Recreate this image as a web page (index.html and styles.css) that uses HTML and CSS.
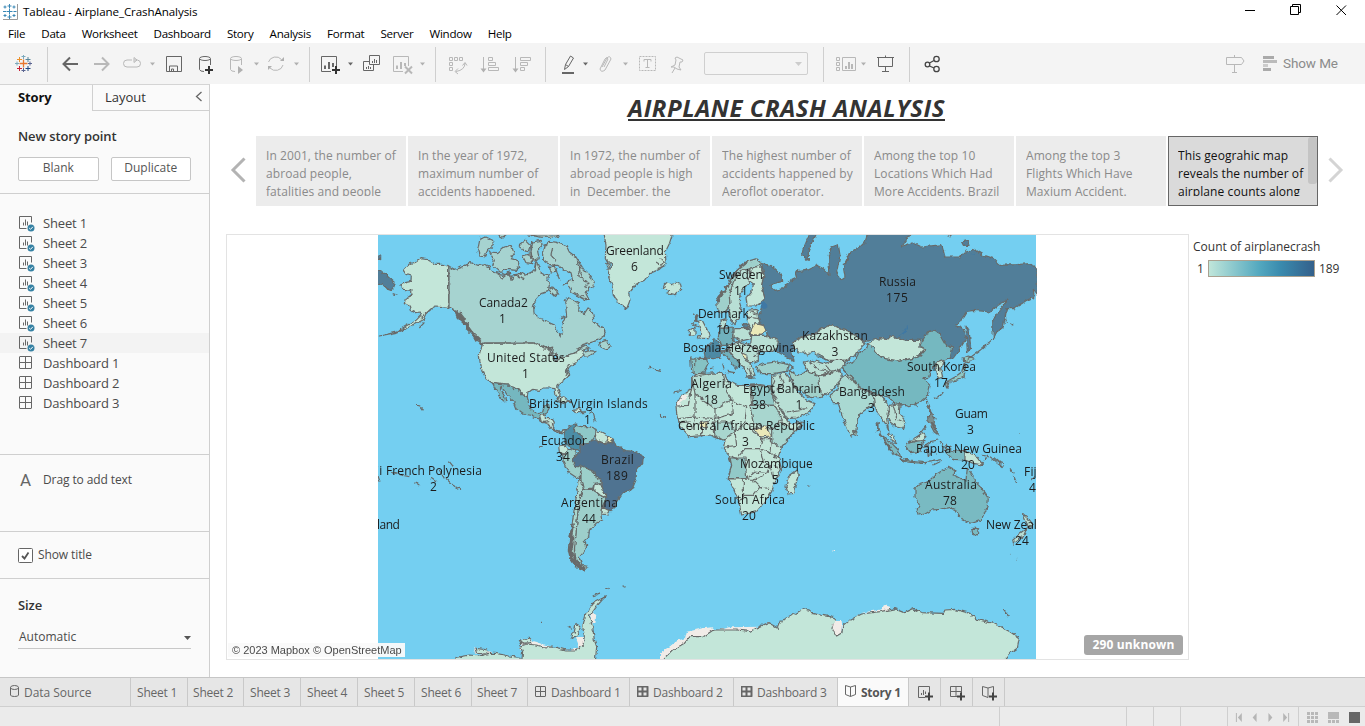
FILE: index.html
```html
<!DOCTYPE html>
<html lang="en">
<head>
<meta charset="utf-8">
<title>Tableau - Airplane_CrashAnalysis</title>
<link rel="stylesheet" href="styles.css">
</head>
<body>
<svg class="defs" width="0" height="0">
  <defs>
    <g id="sheet" fill="none" stroke="#666"><path d="M7.500 12.500H.5V.5h12v6"/><path d="M4.500 9.500v-3M6.500 9.500v-6M8.500 9.500v-4" stroke-width="1"/><circle cx="12" cy="12" r="3.500" fill="#3581a3" stroke="none"/><path d="M10.200 12l1.300 1.300 2.400-2.500" stroke="#fff"/></g>
    <g id="dash" fill="none" stroke="#666"><rect x=".5" y=".5" width="12" height="12" rx=".5"/><path d="M6.500 .5v12M.5 6.500h12"/></g>
    <g id="dashtab" fill="none" stroke="#666"><rect x=".5" y=".5" width="10" height="10" rx=".5"/><path d="M5.500 .5v10M.5 5.500h10"/></g>
    <g id="book" fill="none" stroke="#666"><path d="M5.500 2L.5 .5v9l5 2 5-2v-9L5.500 2v9.500"/></g>
  </defs>
</svg>
<div class="app">
  <header class="titlebar">
    <svg class="appicon" width="17" height="18" viewBox="2 1 17 18"><path d="M3 18.500h14.500V3" fill="none" stroke="#999"/><path d="M9.500 7.500v6M6.500 10.500h6M9.500 3v4M7.500 5h4M9.500 14v4M7.500 16h4M3 10.500h3M13.500 10.500h3M5 4.500v3M3.500 6h3M14 4.500v3M12.500 6h3M5 13v3M3.500 14.500h3M14 13v3M12.500 14.500h3" stroke="#3987b5" fill="none"/></svg>
    <span class="apptitle">Tableau - Airplane_CrashAnalysis</span>
    <svg class="winbtns" width="125" height="22" viewBox="1240 0 125 22" fill="none" stroke="#000"><path d="M1245 10.500h10M1290.500 6.500h8v8h-8zM1292.500 6.500v-2h8v8h-2M1336.500 5.500l9.500 9.500M1346 5.500l-9.500 9.500"/></svg>
  </header>
  <nav class="menu"><span>File</span><span>Data</span><span>Worksheet</span><span>Dashboard</span><span>Story</span><span>Analysis</span><span>Format</span><span>Server</span><span>Window</span><span>Help</span></nav>
  <div class="toolbar">
    <div class="grp"><svg width="47" height="41" viewBox="0 43 47 41" fill="none"><path d="M23.500 59.500v8M19.500 63.500h8" stroke="#e8762d" stroke-width="1.300"/><path d="M19.500 57v5M17 59.500h5" stroke="#eb912c"/><path d="M28 57v5M25.500 59.500h5" stroke="#59879b"/><path d="M19.500 66v5M17 68.500h5" stroke="#c72035"/><path d="M28 66v5M25.500 68.500h5" stroke="#1f457e"/><path d="M23.500 55v4M21.500 56.500h4M15 63.500h4M17 61.500v4" stroke="#7ba9bd"/><path d="M23.500 68v4M21.500 70.500h4M28 63.500h4M30 61.500v4" stroke="#5b6591"/></svg></div>
    <div class="grp">
      <svg width="38" height="41" viewBox="48 43 38 41"><path d="M78 64H63.500M70 57.500L63.500 64l6.500 6.500" class="d2"/></svg>
      <svg width="31" height="41" viewBox="86 43 31 41"><path d="M94 64h14.500M102 57.500l6.500 6.500-6.500 6.500" class="l2"/></svg>
      <svg width="42" height="41" viewBox="117 43 42 41"><path d="M132 60h-5q-3.500 0-3.500 3.500t3.500 3.500h10q3.500 0 3.500-3.500 0-3-3-3.500h-3M134 57.500v5l3-2.500z" class="l"/><path d="M150 62.500h5l-2.500 3z" class="lf"/></svg>
      <svg width="31" height="41" viewBox="159 43 31 41"><path d="M166.500 56.500h15v15h-15zM169.500 71v-5h8v5M171.500 71v-2h2v2" class="d"/></svg>
      <svg width="31" height="41" viewBox="190 43 31 41"><path d="M204 71.500q-4 0-4.500-2V59M210.500 65V59" class="d"/><ellipse cx="205" cy="58.500" rx="5.500" ry="2" class="d"/><path d="M205 70h8M209 66v8" class="k2"/></svg>
      <svg width="41" height="41" viewBox="221 43 41 41"><path d="M235 71.500q-4 0-4.500-2V59M241.500 65V59" class="l"/><ellipse cx="236" cy="58.500" rx="5.500" ry="2" class="l"/><path d="M238 66v8l5-4zM254 62.500h5l-2.500 3z" class="lf"/></svg>
      <svg width="47" height="41" viewBox="262 43 47 41"><path d="M268.500 62a7.500 7 0 0 1 13-2.500M283 65a7.500 7 0 0 1-13 3" class="l"/><path d="M280 61h4v-4zM272 66h-4v4zM294 62.500h5l-2.500 3z" class="lf"/></svg>
    </div>
    <div class="grp">
      <svg width="48" height="41" viewBox="310 43 48 41"><path d="M331 71.500h-9.500v-15h15V66" class="d"/><path d="M325 69v-3.500M329 69v-7M333 67v-4" class="d2"/><path d="M332 70h8M336 66v8" class="k2"/><path d="M348 62.500h5l-2.500 3z" class="df"/></svg>
      <svg width="30" height="41" viewBox="358 43 30 41"><path d="M369.500 55.500h10v9h-10zM369 61.500h-5.500v9h10V65" class="d"/><path d="M372.500 63v-2M374.500 63v-4M376.500 63v-3M366.500 69v-2M368.500 69v-3M370.500 69v-2" class="d"/></svg>
      <svg width="47" height="41" viewBox="388 43 47 41"><path d="M403 71.500h-9.500v-15h15V66" class="l"/><path d="M397 69v-3.500M401 69v-7M405 66v-3" class="l2"/><path d="M405 66.500l7 7M412 66.500l-7 7" class="l2"/><path d="M420 62.500h5l-2.500 3z" class="lf"/></svg>
    </div>
    <div class="grp">
      <svg width="36" height="41" viewBox="436 43 36 41"><path d="M449.500 57.500h3v3h-3zM454.500 57.500h3v3h-3zM459.500 57.500h3v3h-3zM449.500 62.500h3v3h-3zM449.500 67.500h3v3h-3zM465 63q0 7-9 8.500M458 68.500l-3 3 3 2.500M462.500 65.500l2.500-3 2 3" class="l"/></svg>
      <svg width="34" height="41" viewBox="472 43 34 41"><path d="M483.500 57v14M488.500 57.500h4v3h-4zM488.500 62.500h7v3h-7zM488.500 67.500h10v3h-10z" class="l"/><path d="M480.500 68.500h6l-3 4z" class="lf"/></svg>
      <svg width="39" height="41" viewBox="506 43 39 41"><path d="M515.500 57v14M520.500 57.500h10v3h-10zM520.500 62.500h7v3h-7zM520.500 67.500h4v3h-4z" class="l"/><path d="M512.500 68.500h6l-3 4z" class="lf"/></svg>
    </div>
    <div class="grp">
      <svg width="47" height="41" viewBox="546 43 47 41"><path d="M564.500 69.500l1-5 5-8.500 3 2-5 8.500-4 3zM565.500 64.500l3 2" class="d"/><path d="M562 73h12" class="d2"/><path d="M583 62.500h5l-2.500 3z" class="df"/></svg>
      <svg width="42" height="41" viewBox="593 43 42 41"><path d="M602 67l5-9q3-3 4 1l-6 11q-4 3-5-1l5-10q2-3 3 0l-4 8" class="l"/><path d="M623 62.500h5l-2.500 3z" class="lf"/></svg>
      <svg width="30" height="41" viewBox="635 43 30 41"><rect x="639.500" y="56.500" width="16" height="14" class="l" stroke-dasharray="2 1"/><path d="M644 61.500v-2h7v2M647.500 59.500v8M645.500 67.500h4" class="l"/></svg>
      <svg width="39" height="41" viewBox="665 43 39 41"><path d="M677 57l6 3-1 2h-2l-1 5 2 3-4-1-3-2-3 0 4-2 1-5-1-2zM675 68l-3 5" class="l"/></svg>
      <div class="combo"><svg width="9" height="6" viewBox="0 0 9 6"><path d="M1 1h7l-3.500 4z" fill="#ccc"/></svg></div>
    </div>
    <div class="grp">
      <svg width="47" height="41" viewBox="824 43 47 41"><path d="M836.500 57.500h3v3h-3zM836.500 62.500h3v3h-3zM836.500 67.500h3v3h-3zM842.500 57.500h13v13h-13z" class="l"/><path d="M846 69v-3M849 69v-7M852 69v-5" class="l2"/><path d="M861 62.500h5l-2.500 3z" class="lf"/></svg>
      <svg width="38" height="41" viewBox="871 43 38 41"><path d="M877 57.500h17M878.500 58v8.500h14V58M885.500 55.500v2M885.500 66.500v5M882 71.500h7" class="d"/></svg>
    </div>
    <svg width="60" height="41" viewBox="910 43 60 41" fill="none" stroke="#444" stroke-width="1.300"><circle cx="927.500" cy="64.500" r="2.300"/><circle cx="936.500" cy="59" r="2.700"/><circle cx="936.500" cy="69" r="2.700"/><path d="M929.500 63l4.500-2.500M929.500 66l4.500 2"/></svg>
    <div class="right">
      <svg width="58" height="41" viewBox="1220 43 58 41"><path d="M1226.500 57.500h15l2.500 3.500-2.500 3.500h-15zM1234.500 55v2M1234.500 65v8M1232 72.500h5" class="l"/><path d="M1263 56h11v3h-11zM1263 68h8v3h-8z" fill="#aaa"/><path d="M1263 60h14v3h-14z" fill="#bbb"/><path d="M1263 64h5v3h-5z" fill="#ccc"/></svg>
      <span>Show Me</span>
    </div>
  </div>
  <main class="main">
    <aside class="side">
      <div class="sidetabs"><b>Story</b><div class="layout">Layout<svg width="8" height="11" viewBox="0 0 8 11"><path d="M6.500 1L1.500 5.500l5 4.500" fill="none" stroke="#666" stroke-width="1.300"/></svg></div></div>
      <section class="newpoint"><h3>New story point</h3><div class="btns"><button>Blank</button><button>Duplicate</button></div></section>
      <section class="sheets">
        <div class="row"><svg width="16" height="16"><use href="#sheet"/></svg>Sheet 1</div>
        <div class="row"><svg width="16" height="16"><use href="#sheet"/></svg>Sheet 2</div>
        <div class="row"><svg width="16" height="16"><use href="#sheet"/></svg>Sheet 3</div>
        <div class="row"><svg width="16" height="16"><use href="#sheet"/></svg>Sheet 4</div>
        <div class="row"><svg width="16" height="16"><use href="#sheet"/></svg>Sheet 5</div>
        <div class="row"><svg width="16" height="16"><use href="#sheet"/></svg>Sheet 6</div>
        <div class="row hover"><svg width="16" height="16"><use href="#sheet"/></svg>Sheet 7</div>
        <div class="row"><svg width="16" height="16"><use href="#dash"/></svg>Dashboard 1</div>
        <div class="row"><svg width="16" height="16"><use href="#dash"/></svg>Dashboard 2</div>
        <div class="row"><svg width="16" height="16"><use href="#dash"/></svg>Dashboard 3</div>
      </section>
      <section class="drag"><span class="biga">A</span>Drag to add text</section>
      <section class="showtitle"><svg width="15" height="15" viewBox="0 0 15 15"><rect x=".5" y=".5" width="14" height="14" rx="1" fill="#fff" stroke="#666"/><path d="M4 8l2.500 2.500L10.500 4.500" fill="none" stroke="#555" stroke-width="1.800"/></svg><span>Show title</span></section>
      <section class="size"><h3>Size</h3><div class="select">Automatic<svg width="7" height="4"><path d="M0 0h7L3.500 4z" fill="#555"/></svg></div></section>
    </aside>
    <div class="story">
      <h1>AIRPLANE CRASH ANALYSIS</h1>
      <div class="points">
        <svg class="prev" width="16" height="26" viewBox="0 0 16 26"><path d="M14.500 1.500L3 13 14.500 24.500" fill="none" stroke="#b3b3b3" stroke-width="3"/></svg>
        <div class="pt"><p>In 2001, the number of<br>abroad people,<br>fatalities and people</p></div>
        <div class="pt"><p>In the year of 1972,<br>maximum number of<br>accidents happened.</p></div>
        <div class="pt"><p>In 1972, the number of<br>abroad people is high<br>in&nbsp; December, the</p></div>
        <div class="pt"><p>The highest number of<br>accidents happened by<br>Aeroflot operator.</p></div>
        <div class="pt"><p>Among the top 10<br>Locations Which Had<br>More Accidents. Brazil</p></div>
        <div class="pt"><p>Among the top 3<br>Flights Which Have<br>Maxium Accident.</p></div>
        <div class="pt active"><p>This geograhic map<br>reveals the number of<br>airplane counts along</p><i class="thumb"></i></div>
        <svg class="next" width="16" height="26" viewBox="0 0 16 26"><path d="M1.500 1.500L13 13 1.500 24.500" fill="none" stroke="#d4d4d4" stroke-width="3"/></svg>
      </div>
      <div class="viz">
        <div class="mapbox">
          <svg class="map" width="659" height="424" viewBox="378 235 659 424">
            <defs><filter id="coast" x="0" y="0" width="100%" height="100%"><feTurbulence type="fractalNoise" baseFrequency=".22" numOctaves="2" seed="4"/><feDisplacementMap in="SourceGraphic" scale="4.500" xChannelSelector="R" yChannelSelector="G"/></filter></defs>
            <rect x="378" y="235" width="658" height="424" fill="#74cff1"/>
            <g filter="url(#coast)" class="land">
              <g transform="translate(376 232) scale(.33333)">
                <path class="c1" d="M218 102L200 97 178 97 155 83 135 80 120 90 100 96 82 115 90 127 106 132 105 148 88 152 72 160 85 172 108 176 106 190 88 200 85 215 100 222 104 236 118 242 130 240 135 250 120 265 90 282 60 300 10 312 60 302 100 285 145 262 155 240 168 228 180 222 200 224 218 226Z"/>
                <path class="c2" d="M218 102L235 112 250 108 268 100 285 92 300 98 310 100 325 98 340 106 360 125 385 132 400 125 412 138 425 128 440 122 450 130 465 122 475 112 480 85 490 110 500 130 520 125 515 140 520 160 515 178 495 185 478 205 472 225 475 245 490 258 515 270 538 280 545 300 555 312 560 300 555 285 560 270 572 255 570 230 565 205 580 200 595 208 610 215 608 235 625 245 638 225 650 245 655 270 672 285 686 292 686 310 665 325 640 332 620 338 608 350 603 362 585 366 560 375 545 385 540 372 525 368 515 350 490 340 475 333 320 333 300 325 285 300 270 285 255 255 240 238 218 226Z"/>
                <path class="c1" d="M320 334L475 333 490 340 515 350 527 370 540 388 560 375 585 366 603 362 612 350 620 358 625 372 610 378 600 392 585 400 580 410 575 420 578 432 570 440 550 455 545 465 552 485 550 500 540 490 537 470 520 468 500 468 490 475 470 472 456 482 454 495 440 488 425 470 415 474 405 460 378 458 350 454 330 440 318 415 312 390 310 370Z"/>
                <path fill="#74b7bf" d="M350 454L378 458 405 460 415 474 425 470 440 488 454 495 458 515 465 532 480 542 500 540 505 522 518 518 520 528 510 545 495 552 488 562 465 550 440 546 420 530 410 505 395 490 380 470 370 465 378 480 385 492 390 508 382 510 370 490 360 475Z"/>
                <path class="c1" d="M488 562L498 548 508 550 508 560 530 560 535 568 533 588 548 598 570 592 576 600 560 602 545 602 525 590 515 575 500 570ZM540 500L560 495 585 512 560 510ZM592 532L610 530 625 542 600 542Z"/>
                <path class="c2" d="M500 60L505 40 520 28 545 32 570 40 580 60 600 75 612 95 625 115 640 130 655 150 650 165 635 170 630 185 640 205 620 200 600 188 585 180 575 150 590 145 585 125 560 110 545 100 520 98 500 85ZM340 60L365 62 385 45 405 40 415 65 405 80 425 85 430 100 420 115 395 112 370 118 350 100 355 85ZM305 55L312 20 330 15 350 25 352 40 335 55 325 75 310 72ZM430 40L450 25 465 40 460 60 440 55ZM470 30L495 25 498 40 485 55 490 80 470 85 465 60ZM440 72L465 65 470 95 450 92ZM455 9L555 9 540 15 500 16ZM365 7L392 7 380 16ZM515 170L530 165 550 185 535 190ZM520 105L535 100 540 118 525 120ZM670 332L690 325 703 345 690 352 675 345ZM605 350L625 340 640 348 615 355ZM620 362L640 356 660 358 640 372 622 372Z"/>
                <path class="c1" d="M684 4L690 40 688 80 700 100 697 130 708 160 712 190 730 212 752 230 762 205 758 185 778 160 805 145 820 125 850 112 870 95 868 60 880 35 890 4ZM692 95L706 92 706 108 695 108Z"/>
                <path class="c1" d="M865 158L872 153 887 158 902 152 914 158 917 172 897 188 874 182 882 175 862 168Z"/>
                <path class="ru" d="M0 112L20 120 45 142 60 155 45 175 30 170 20 155 0 160ZM4 72L14 72 14 82 4 82Z"/>
                <path d="M240 236L252 262 266 275 276 292 300 316 318 340M248 245L262 262 272 280 290 305 310 325" class="fjord"/>
                <path class="wire" d="M240 238L262 270 278 275 270 290 290 300 298 320 318 335M250 240L268 262 262 275M290 302L315 325M360 122L400 130 440 125M365 128L380 138 400 120 405 145 420 130 445 140M500 340L525 355 515 342M505 352L530 345 525 368M520 365L540 362 545 380M555 375L570 372M575 412L570 430M568 420L578 400M120 520L132 522 142 535M820 405L840 415 855 418M535 505L565 515M640 540L652 545 658 568M855 552L870 556M130 285L145 268M75 300L90 290M110 185L100 195M50 185L65 190M540 110L545 130 552 145M560 160L575 150M480 95L475 118M610 100L620 140 640 160M590 180L625 195M530 50L525 70 540 85M600 85L615 110 605 130 635 150M625 165L640 155M850 80L865 88 855 100 840 90M845 110L868 100M150 245L165 232M135 262L150 240M555 250L568 255 552 262M688 300L680 285"/>
              </g>
              <g transform="translate(376 420) scale(.33333)">
                <path fill="#8ec8c8" d="M595 15L615 20 640 20 660 28 662 42 655 50 640 70 622 72 620 50 595 38Z"/>
                <path fill="#4c8ea7" d="M570 30L585 14 600 12 595 35 615 45 622 50 620 75 612 95 595 85 575 75 565 60Z"/>
                <path class="c1" d="M660 30L680 40 698 50 692 68 680 68 665 62 658 48ZM548 78L568 75 578 88 560 105 550 95Z"/><path fill="#ebe9b8" d="M698 50L712 58 702 68 692 66Z"/>
                <path fill="#9ccfca" d="M560 105L578 88 600 92 595 108 588 122 605 140 615 145 612 178 600 172 575 155 562 125ZM615 138L635 138 650 150 660 168 676 180 672 188 655 190 650 205 640 205 622 208 615 185Z"/>
                <path fill="#9dcfcb" d="M622 208L650 208 672 225 690 236 680 258 678 285 680 300 660 310 650 325 640 330 638 350 625 362 632 378 620 400 610 412 618 435 605 438 598 415 595 380 600 340 605 280 610 235Z"/>
                <path fill="#4f7391" d="M712 58L720 78 750 92 775 95 802 108 800 128 782 150 780 180 768 208 740 218 722 245 705 275 680 262 692 232 690 220 678 212 675 195 676 178 660 168 655 150 635 145 615 135 600 140 588 120 600 105 612 98 612 75 635 70 655 58 665 65 685 70 705 68Z"/>
                <path class="c1" d="M655 192L672 190 678 212 692 222 690 235 672 225 652 208ZM680 262L700 272 692 284 678 282Z"/>
                <path fill="#aad8d0" d="M612 178L618 190 622 208 610 235 604 290 600 340 595 390 598 415 612 435 635 440 625 450 600 440 583 415 577 390 582 350 590 300 598 250 605 200Z"/>
                <path class="fjord" d="M590 310L586 345 580 385 586 415 602 437 628 446M592 350L586 390 598 420 612 436"/>
                <path class="ice" d="M650 575L660 590 658 612 640 610ZM300 700L295 680 315 690 345 695 360 705 320 705ZM432 690L440 655 480 665 540 685 580 690 610 680 600 655 620 650 625 690 540 700Z"/>
                <path class="c1" d="M240 712L280 705 310 708 340 700 360 700 400 708 432 712V725H240ZM437 725L440 695 432 678 450 672 480 675 500 680 540 682 570 690 600 690 620 678 625 650 620 620 630 580 650 550 688 530 665 555 640 590 650 620 655 660 662 680 658 725ZM300 685L335 690 335 702 305 700ZM430 660L460 655 465 668 435 670ZM600 610L612 625 605 650 585 655 595 635Z"/>
                <path class="wire" d="M650 528L675 518M688 508L698 505M740 500L748 502M495 607L498 607M575 620L585 625M488 0L500 8 520 5M220 125L232 140M190 150L205 175M45 155L75 165 100 170M115 185L130 195M210 175L230 195 255 210M165 175L180 185M5 165L12 185M490 82L500 82M525 10L535 32 560 35"/>
                <path class="ice" d="M856 725V695L880 680 900 665 910 690 880 725Z"/>
              </g>
              <g transform="translate(660 232) scale(.33333)">
                <path fill="#9fd0cc" d="M170 205L178 195 200 165 215 140 235 110 262 88 290 80 305 92 298 102 270 110 245 115 222 150 208 190 210 222 195 240 180 242 172 228Z"/>
                <path class="c3" d="M210 215L208 190 220 150 245 115 268 112 268 150 255 165 240 185 238 210 243 225 238 255 222 278 210 262 205 235Z"/>
                <path class="c1" d="M270 110L300 100 312 130 305 160 315 200 290 222 262 222 258 200 275 180 280 158 268 150ZM262 235L290 232 300 270 272 290 262 270Z"/>
                <path class="fjord" d="M172 210L180 194 200 166 214 142 234 112 262 90"/>
                <path class="ru" d="M305 95L330 100 365 130 368 148 340 155 330 160 345 175 370 170 385 150 410 138 405 120 440 115 470 100 490 110 510 130 505 70 515 45 535 38 540 70 530 120 540 145 555 135 550 100 570 60 600 45 615 30 625 0 755 0 725 45 755 30 785 45 845 38 855 75 900 75 915 60 940 52 970 70 1000 80 1020 100 1070 98 1110 95 1132 110 1132 190 1120 172 1122 195 1100 205 1085 215 1060 230 1040 230 1035 260 1030 285 1010 300 1000 320 998 265 1025 225 1045 200 1020 215 990 240 940 235 920 238 900 270 888 280 910 290 918 320 900 350 880 378 865 382 875 345 860 340 840 305 815 295 802 300 798 320 780 325 740 325 690 312 680 322 650 320 635 322 615 330 570 300 540 290 520 278 480 290 470 305 440 310 400 330 402 345 395 360 402 385 380 375 350 358 345 335 355 325 325 315 318 295 305 290 295 255 305 225 315 200 305 160 312 130ZM425 70L430 50 450 4 470 4 455 35 445 60 445 85ZM918 285L928 300 932 350 922 360 920 320ZM905 30L925 25 930 40 910 40ZM410 110L418 118 408 120ZM250 275L265 278 265 286 252 286Z"/>
                <path class="lake" d="M742 275Q740 300 710 314Q735 310 744 290ZM300 212L310 207 323 222 312 231 302 224ZM935 70L945 64 942 62Z"/>
                <path class="c1" d="M400 330L440 310 470 305 480 290 520 278 540 290 570 300 600 320 615 335 600 350 590 365 560 385 545 385 530 385 500 385 480 370 460 360 440 370 430 360 415 360 402 345ZM622 335L650 320 680 322 690 312 740 325 780 325 780 345 798 348 770 375 720 388 670 380 640 358Z"/>
                <path class="ch" d="M545 405L585 385 595 365 615 355 622 335 640 345 645 362 675 380 720 388 775 375 798 350 780 340 802 300 825 295 840 305 860 340 878 348 870 378 845 392 825 400 810 420 805 440 790 440 810 460 805 490 780 510 745 525 725 515 705 520 685 495 655 490 630 490 600 470 580 440 550 415Z"/>
                <path fill="#a9d9d2" d="M540 440L560 425 572 430 580 445 600 468 645 490 650 510 635 520 600 545 590 570 588 595 575 612 566 600 548 555 535 515 520 515 510 490 530 475ZM578 595L590 598 592 612 582 608Z"/>
                <path class="c3" d="M640 495L658 488 680 510 688 545 680 560 688 610 680 580 660 550 645 530ZM688 520L720 515 718 545 738 570 730 590 710 585 690 570 680 550Z"/>
                <path class="c1" d="M825 395L850 385 842 410 848 435 835 440 830 415Z"/>
                <path fill="#8fc8c4" d="M910 378L925 372 945 380 925 392 910 388ZM918 395L912 435 880 450 858 450 885 435 905 420 912 395ZM855 452L866 455 860 468Z"/>
                <path fill="#9dd0cc" d="M290 405L310 395 350 390 385 398 380 418 340 425 300 425Z"/>
                <path class="c3" d="M335 430L375 425 395 450 415 480 440 505 465 515 450 540 410 558 380 560 350 510 335 470ZM430 390L460 385 490 395 530 385 560 385 545 410 510 425 480 430 440 415ZM475 430L540 415 545 440 510 480 490 495 480 470Z"/>
                <path fill="#a1d1ca" d="M385 415L412 430 440 418 475 430 480 470 490 495 455 500 430 480 410 470 395 445Z"/>
                <path fill="#85c2c4" d="M92 378L140 380 145 395 130 425 105 428 95 420Z"/>
                <path fill="#4d8aa4" d="M132 350L150 335 165 320 185 345 180 375 160 380 135 378Z"/>
                <path fill="#6fb0bc" d="M180 290L218 285 222 325 210 340 185 340 175 315ZM180 358L205 352 215 370 240 395 228 410 200 375Z"/>
                <path class="c3" d="M222 290L270 290 272 320 240 328 222 315ZM275 310L318 310 355 325 350 350 330 358 300 360 272 340ZM205 340L240 330 272 340 295 355 295 385 270 395 285 430 265 435 255 410 235 390 215 365ZM180 265L198 260 195 288 182 288Z"/>
                <path class="c1" d="M115 265L125 262 150 310 145 320 115 318 125 300ZM88 295L105 285 105 308 88 310Z"/>
                <path class="fjord" d="M108 262L112 250M112 272L104 258"/>
                <path fill="#ebe9b8" d="M285 272L310 278 318 295 305 310 275 308 272 295ZM245 362L260 370 262 385 248 375Z"/>
                <path class="c1" d="M95 435L110 425 160 423 195 425 200 445 230 460 270 460 300 458 330 462 335 480 360 530 380 565 390 575 430 570 410 594 365 644 355 674 365 714 345 744 335 779 310 814 290 839 245 849 235 804 215 759 205 739 215 699 205 669 190 649 195 624 175 619 150 609 90 614 60 584 50 545 48 520 65 490 95 470ZM385 734L412 714 415 729 400 784 385 786 378 764Z"/>
                <path fill="#b4dcd2" d="M95 435L160 423 190 425 200 480 215 500 165 530 105 485Z"/>
                <path fill="#92c9c8" d="M275 460L330 462 335 480 345 520 278 520ZM210 678L255 678 260 740 205 740 215 700Z"/>
                <path fill="#a8d6cf" d="M270 520L345 520 365 560 340 590 280 575ZM335 590L365 570 390 590 405 595 360 650 335 625ZM160 570L215 570 225 600 190 625 165 610Z"/>
                <path fill="#ebe9b8" d="M280 590L320 582 332 612 300 615ZM120 572L145 568 140 588 122 585Z"/>
                <path class="ice" d="M48 525L65 490 85 488 75 505Z"/>
                <path class="wire" d="M95 470L85 520 48 522M105 485L105 555 55 560M165 530L165 560 105 555M215 500L220 545 165 560M220 510L260 525 255 570 225 600M270 460L275 520M165 560L160 600M105 555L95 590M125 585L125 614M90 570L60 572M260 570L280 600 310 620 300 650 255 650 230 680 205 670M225 600L230 640 195 645M300 620L335 620 330 660 350 680M300 650L310 690 330 700 320 725 285 720 260 740M210 740L290 742 310 730M250 740L250 800 235 805M250 790L280 790 300 765 330 770M280 745L305 770M300 650L355 675M340 700L365 715M330 700L340 740M200 345L240 330M280 370L295 372M255 385L275 395M240 400L255 410M265 405L278 440M188 395L192 410M200 418L225 422M255 435L285 438M450 390L470 410 510 420M470 370L500 385M330 430L345 445 335 470M360 430L370 455 350 475M545 405L570 440 600 465M380 540L440 530M500 400L520 425M380 395L400 405 390 415M100 245L110 262 95 275 115 285M205 160L180 200M240 105L210 150M620 475L645 485M700 520L710 560 730 570M765 510L770 525M800 500L800 515M150 410L160 408M40 480L65 475M0 550L15 558M850 480L840 492 820 500M1000 320L960 355 920 385M1035 245L1040 275M1050 275L1060 280M105 380L102 425M860 10L875 15M240 340L245 360M215 320L240 345M570 60L555 100M655 570L652 600M270 240L290 245M262 255L295 260"/>
              </g>
              <g transform="translate(660 420) scale(.33333)">
                <path class="au" d="M765 205L775 195 805 185 825 165 850 150 865 142 885 152 882 165 905 178 918 180 922 145 935 160 945 185 965 205 985 235 982 260 965 300 935 310 910 300 895 285 885 268 870 262 840 268 815 270 795 282 775 285 770 270 778 255 765 230ZM935 325L955 325 952 345 938 340ZM665 48L690 65 715 90 722 112 700 100 680 75ZM720 115L750 120 790 125 790 130 740 126ZM740 70L765 65 785 60 795 62 785 75 780 95 750 98 740 85ZM855 85L880 92 915 95 918 120 880 118 860 100Z"/>
                <path class="c1" d="M915 95L945 105 970 135 940 130 915 120ZM745 65L765 55 785 40 798 50 785 62ZM685 40L700 45 710 72 695 62Z"/>
                <path class="c3" d="M1088 280L1105 295 1120 315 1105 325 1100 310ZM1100 325L1090 350 1060 372 1058 358 1080 340Z"/>
                <path d="M800 0L812 -15 804 -40 808 -48 812 -25 825 -5 822 8 828 30 835 45 822 35 812 15Z" fill="#7a8f8f"/>
                <path class="fjord" d="M815 5L825 25M668 55L690 85"/>
                <path class="wire" d="M650 5L655 30 665 50M790 80L810 65 835 60M800 70L805 110 815 90 830 100M795 128L815 125 845 118M820 135L840 125M840 65L850 80M965 105L985 110 970 120M990 110L1030 140M1000 112L1020 128 1032 130M1050 145L1060 160M1060 165L1070 190M780 40L800 15M1115 180L1125 170M1050 403L1054 403M445 197L448 200M1070 418L1072 418M1030 570L1045 588M890 275L900 290M580 35L588 40M730 120L790 130M675 70L690 90 700 105M1080 38L1082 40M850 85L860 75 875 85"/>
                <path class="ice" d="M0 720V700L30 680 55 660 75 655 80 635 130 625 155 622 165 632 210 622 300 620 325 605 330 625 200 640 100 660 30 720ZM518 605H545V640L530 650 515 625ZM600 580L665 568 672 555 690 560 690 575ZM518 390H525V393H518Z"/>
                <path class="c1" d="M5 725L40 690 75 668 90 650 130 650 160 630 230 630 270 634 325 608 355 625 365 600 400 585 430 566 450 572 455 580 520 592 526 600 516 625 530 648 546 638 548 620 570 600 605 582 660 575 705 566 735 578 760 566 785 578 850 580 855 570 885 568 930 580 950 598 1000 610 1050 635 1078 655 1072 685 1050 700 1030 725Z"/>
                <path class="ice" d="M522 603H545L543 632 531 645 517 626Z"/>
              </g>
            </g>
            <path d="M449 266V308M482 343H533" stroke="#6f7573" stroke-width="1.200"/>
            <g fill="#1c1c1c" class="lbl">
              <text x="606" y="255" textLength="58">Greenland</text><text x="631" y="271">6</text>
              <text x="479" y="307" textLength="49">Canada2</text><text x="499" y="323">1</text>
              <text x="487" y="362" textLength="78">United States</text><text x="522" y="378">1</text>
              <text x="529" y="408" textLength="119">British Virgin Islands</text><text x="584" y="424">1</text>
              <text x="541" y="445" textLength="46">Ecuador</text><text x="556" y="461">34</text>
              <text x="601" y="464" textLength="33">Brazil</text><text x="606" y="480" textLength="22">189</text>
              <text x="561" y="507" textLength="57">Argentina</text><text x="582" y="523">44</text>
              <text x="386" y="475" textLength="96">French Polynesia</text><text x="376" y="475">ji</text><text x="430" y="491">2</text>
              <text x="377" y="529" textLength="23">land</text>
              <text x="719" y="279" textLength="44">Sweden</text><text x="734" y="295">11</text>
              <text x="698" y="318" textLength="51">Denmark</text><text x="716" y="334">10</text>
              <text x="683" y="352" textLength="113">Bosnia-Herzegovina</text><text x="735.500" y="368">1</text>
              <text x="802" y="340" textLength="66">Kazakhstan</text><text x="831.500" y="356">3</text>
              <text x="879" y="286" textLength="37">Russia</text><text x="886" y="302" textLength="22">175</text>
              <text x="691" y="388" textLength="41">Algeria</text><text x="704" y="404">18</text>
              <text x="743" y="393" textLength="32">Egypt</text><text x="752" y="409">38</text>
              <text x="777" y="393" textLength="44">Bahrain</text><text x="795.500" y="409">1</text>
              <text x="839" y="396" textLength="66">Bangladesh</text><text x="868" y="412">3</text>
              <text x="907" y="371" textLength="69">South Korea</text><text x="934" y="387">17</text>
              <text x="955" y="418" textLength="33">Guam</text><text x="967" y="434">3</text>
              <text x="678" y="430" textLength="137">Central African Republic</text><text x="742" y="446">3</text>
              <text x="740" y="468" textLength="73">Mozambique</text><text x="772" y="484">5</text>
              <text x="715" y="504" textLength="70">South Africa</text><text x="742" y="520">20</text>
              <text x="916" y="453" textLength="106">Papua New Guinea</text><text x="961" y="469">20</text>
              <text x="925" y="489" textLength="52">Australia</text><text x="943" y="505">78</text>
              <text x="1024" y="476">Fiji</text><text x="1029" y="492">4</text>
              <text x="986" y="529" textLength="51">New Zeal</text><text x="1015" y="545">24</text>
            </g>
            <rect x="1036" y="300" width="1" height="359" fill="#fff"/>
          </svg>
          <span class="credit">© 2023 Mapbox © OpenStreetMap</span>
          <span class="unknown">290 unknown</span>
        </div>
        <div class="legend"><div class="ltitle">Count of airplanecrash</div><div class="scale"><span>1</span><i></i><span>189</span></div></div>
      </div>
    </div>
  </main>
  <footer class="tabs">
    <div class="tab ds"><svg width="9" height="12" viewBox="0 0 9 12" fill="none" stroke="#666"><ellipse cx="4.500" cy="2.500" rx="4" ry="2"/><path d="M.5 2.500V10q0 1.500 4 1.500t4-1.500V2.500"/></svg>Data Source</div>
    <div class="tab s1">Sheet 1</div><div class="tab s2">Sheet 2</div><div class="tab s1">Sheet 3</div><div class="tab s1">Sheet 4</div><div class="tab s1">Sheet 5</div><div class="tab s1">Sheet 6</div><div class="tab s2">Sheet 7</div>
    <div class="tab d1"><svg width="12" height="11"><use href="#dashtab"/></svg>Dashboard 1</div>
    <div class="tab d2"><svg width="12" height="11"><use href="#dashtab"/></svg>Dashboard 2</div>
    <div class="tab d2"><svg width="12" height="11"><use href="#dashtab"/></svg>Dashboard 3</div>
    <div class="tab on"><svg width="12" height="12"><use href="#book"/></svg>Story 1</div>
    <div class="tab add"><svg width="16" height="15" fill="none" stroke="#666"><path d="M7 11.500H.5V.5h11V7M3.500 9V7M5.500 9V4M7.500 8V5.500"/><path d="M7 10.500h8M11 6.500v8" stroke="#444" stroke-width="2"/></svg></div>
    <div class="tab add"><svg width="16" height="15" fill="none" stroke="#666"><path d="M7 10.500H.5V.5h11V7M.5 5.500h11M6 .5v10"/><path d="M7 10.500h8M11 6.500v8" stroke="#444" stroke-width="2"/></svg></div>
    <div class="tab add"><svg width="16" height="15" fill="none" stroke="#666"><path d="M6 2L.5 .5v9L6 11.500V2l5.500-1.500V7"/><path d="M7 10.500h8M11 6.500v8" stroke="#444" stroke-width="2"/></svg></div>
  </footer>
  <div class="status">
    <i class="w0"></i><i class="w1"></i><i class="w2"></i><i class="w2"></i><i class="w3"></i>
    <svg class="nav" width="71" height="19" viewBox="1228 707 71 19"><path d="M1236 713h1v9h-1zM1242 713v9l-4-4.500zM1257 713v9l-4-4.500zM1269 713v9l4-4.500zM1284 713v9l4-4.500zM1289 713h1v9h-1z" fill="#b5b5b5"/></svg>
    <svg width="65" height="19" viewBox="1299 707 65 19" fill="#b8b8b8"><path d="M1307 712h3v3h-3zM1311 712h3v3h-3zM1315 712h3v3h-3zM1307 716h3v3h-3zM1311 716h3v3h-3zM1315 716h3v3h-3zM1307 720h3v3h-3zM1311 720h3v3h-3zM1315 720h3v3h-3zM1328 712h11v7h-11zM1328 720h3v3h-3zM1332 720h3v3h-3zM1336 720h3v3h-3z"/><path d="M1349 712h11v11h-11z" fill="#666"/></svg>
  </div>
</div>
</body>
</html>
```
FILE: styles.css
```css
* { box-sizing: border-box; }
body { margin: 0; background: #fff; font-family: "Open Sans", "Noto Sans", sans-serif; font-size: 12px; color: #4b4b4b; }
svg { display: block; flex: none; }
.defs { position: absolute; }
h1, h3, p { margin: 0; }
.app { width: 1365px; height: 726px; display: flex; flex-direction: column; overflow: hidden; }
.titlebar { height: 22px; flex: none; display: flex; align-items: center; color: #000; }
.appicon { margin-left: 2px; }
.apptitle { margin-left: 4px; font-size: 11.6px; letter-spacing: -.1px; line-height: 22px; margin-top: 1px; }
.winbtns { margin-left: auto; }
.menu { height: 21px; flex: none; display: flex; padding-left: 8px; gap: 16px; line-height: 24px; color: #000; font-size: 11.6px; letter-spacing: -.27px; }
.toolbar { height: 41px; flex: none; background: #f4f4f4; display: flex; }
.grp { display: flex; position: relative; padding-right: 1px; }
.grp::after { content: ""; position: absolute; right: 0; top: 4px; height: 35px; width: 1px; background: #cfcfcf; }
.d { fill: none; stroke: #666; }
.l { fill: none; stroke: #b8b8b8; }
.d2 { fill: none; stroke: #666; stroke-width: 2; }
.l2 { fill: none; stroke: #b8b8b8; stroke-width: 2; }
.k2 { fill: none; stroke: #333; stroke-width: 2; }
.df { fill: #666; }
.lf { fill: #b0b0b0; }
.combo { width: 104px; height: 23px; margin: 9px 15px 0 0; border: 1px solid #cfcfcf; border-radius: 2px; display: flex; justify-content: flex-end; align-items: center; padding-right: 4px; }
.right { margin-left: auto; display: flex; width: 145px; line-height: 41px; color: #8b8b8b; font-size: 13.5px; font-family: Roboto, sans-serif; }
.right span { margin-left: 5px; letter-spacing: -.1px; }
.main { height: 593px; flex: none; display: flex; }
.side { width: 210px; background: #fafafa; border-right: 1px solid #cfcfcf; border-top: 1px solid #d4d4d4; display: flex; flex-direction: column; }
.sidetabs { height: 26px; display: flex; line-height: 25px; font-size: 13px; color: #333; }
.sidetabs b { width: 92px; padding-left: 18px; color: #111; font-size: 13px; letter-spacing: -.1px; }
.layout { flex: 1; border-left: 1px solid #d0d0d0; border-bottom: 1px solid #d0d0d0; padding: 0 6px 0 12px; display: flex; justify-content: space-between; }
.layout svg { margin-top: 6px; }
h3 { font-size: 13px; line-height: 18px; color: #333; font-weight: 600; letter-spacing: -.1px; }
.newpoint { height: 83px; padding: 16px 18px 0; border-bottom: 1px solid #cfcfcf; }
.btns { display: flex; gap: 12px; margin-top: 12px; }
button { width: 81px; height: 24px; border: 1px solid #c6c6c6; border-radius: 2px; background: #fff; font: 12px "Open Sans", sans-serif; color: #555; padding: 0 0 3px; }
.sheets { height: 261px; padding-top: 19px; border-bottom: 1px solid #cfcfcf; font-size: 13px; letter-spacing: -.15px; }
.row { height: 20px; display: flex; align-items: center; line-height: 20px; padding-left: 19px; gap: 8px; }
.row svg { margin-top: 2px; }
.hover { background: #f3f3f3; }
.drag { height: 77px; border-bottom: 1px solid #cfcfcf; padding: 15px 0 0 20px; display: flex; line-height: 20px; letter-spacing: -.1px; }
.biga { font: 17px/20px Roboto, sans-serif; color: #666; width: 23px; }
.showtitle { height: 47px; border-bottom: 1px solid #cfcfcf; display: flex; align-items: center; padding-left: 18px; gap: 5px; letter-spacing: -.1px; }
.showtitle span { margin-top: -2px; }
.size { padding: 17px 18px 0; }
.select { margin-top: 11px; height: 24px; padding: 4px 0 0 1px; border-bottom: 1px solid #c8c8c8; display: flex; justify-content: space-between; width: 173px; line-height: 16px; }
.select svg { margin-top: 7px; }
.story { flex: 1; display: flex; flex-direction: column; }
h1 { height: 52px; padding: 6px 2px 0 0; line-height: 36px; text-align: center; font-size: 24px; font-style: italic; font-weight: 700; color: #333; text-decoration: underline; text-decoration-thickness: 2px; text-underline-offset: 2px; letter-spacing: .55px; }
.points { display: flex; height: 70px; gap: 2px; }
.prev { margin: 21px 8px 0 20px; }
.next { margin: 21px 0 0 8px; }
.pt { width: 150px; height: 70px; background: #ececec; padding: 10px 0 0 10px; color: #8a8a8a; font-size: 12px; letter-spacing: .08px; position: relative; white-space: nowrap; }
.pt p { height: 50px; line-height: 18px; padding-top: 1px; overflow: hidden; }
.active { background: #dadada; border: 1px solid #666; color: #111; padding: 9px 0 0 9px; }
.thumb { position: absolute; right: 0; top: 0; width: 9px; height: 47px; border-radius: 3px; background: #c4c4c4; }
.viz { display: flex; margin: 28px 0 0 16px; }
.mapbox { width: 963px; height: 426px; border: 1px solid #e3e3e3; padding-left: 151px; position: relative; }
.map { overflow: hidden; }
.land path { stroke: #686b6a; stroke-width: 1.2; vector-effect: non-scaling-stroke; stroke-linejoin: round; }
.land .c1 { fill: #c3e6d9; }
.land .c2 { fill: #a6d3d0; }
.land .c3 { fill: #b8dfd5; }
.land .ru { fill: #517e99; }
.land .ch { fill: #74b8c0; }
.land .au { fill: #79bac2; }
.land .lake { fill: #3f78a4; stroke: none; }
.land .ice { fill: #f1ece8; stroke: none; }
.land .wire { fill: none; }
.land .fjord { fill: none; stroke-width: 2.6; }
.lbl text { font: 12px "Open Sans", "Noto Sans", sans-serif; letter-spacing: .2px; }
.credit { position: absolute; left: 1px; bottom: 2px; background: rgba(250,250,250,.95); font: 11px/14px "Liberation Sans", sans-serif; padding: 0 4px; width: 177px; white-space: nowrap; }
.unknown { position: absolute; right: 5px; bottom: 4px; width: 99px; height: 20px; background: #a6a6a6; border-radius: 3px; color: #fff; text-align: center; font: bold 12px/20px "Open Sans", sans-serif; letter-spacing: .15px; }
.legend { padding: 4px 0 0 4px; color: #333; }
.ltitle { line-height: 18px; }
.scale { display: flex; padding-left: 4px; line-height: 17px; margin-top: 4px; gap: 4px; }
.scale i { width: 107px; height: 17px; border: 1px solid #aaa190; background: linear-gradient(90deg, #c0e6da, #53a8bf 48%, #3a8bae 68%, #34608b); }
.tabs { height: 30px; flex: none; background: #e6e6e6; border-top: 1px solid #c6c6c6; border-bottom: 1px solid #cfcfcf; display: flex; color: #666; }
.tab { border-right: 1px solid #c9c9c9; display: flex; align-items: center; gap: 4px; padding-left: 6px; font-size: 12px; white-space: nowrap; letter-spacing: -.2px; flex: none; }
.tab svg { margin-top: -2px; }
.ds { width: 131px; padding-left: 10px; gap: 5px; letter-spacing: -.05px; }
.s1 { width: 57px; }
.s2 { width: 56px; }
.tab.s2 { padding-left: 5px; }
.d1 { width: 102px; padding-left: 7px; }
.d2 { width: 104px; padding-left: 7px; }
.on { width: 71px; background: #fafafa; font-weight: 700; color: #555; letter-spacing: -.25px; padding-left: 7px; }
.add { width: 32px; padding-left: 9px; }
.add svg { margin-top: 2px; }
.status { height: 19px; flex: none; background: #ebebeb; display: flex; }
.status i, .nav { border-right: 1px solid #cfcfcf; }
.w0 { width: 1000px; }
.w1 { width: 127px; }
.w2 { width: 27px; }
.w3 { width: 47px; }
```
